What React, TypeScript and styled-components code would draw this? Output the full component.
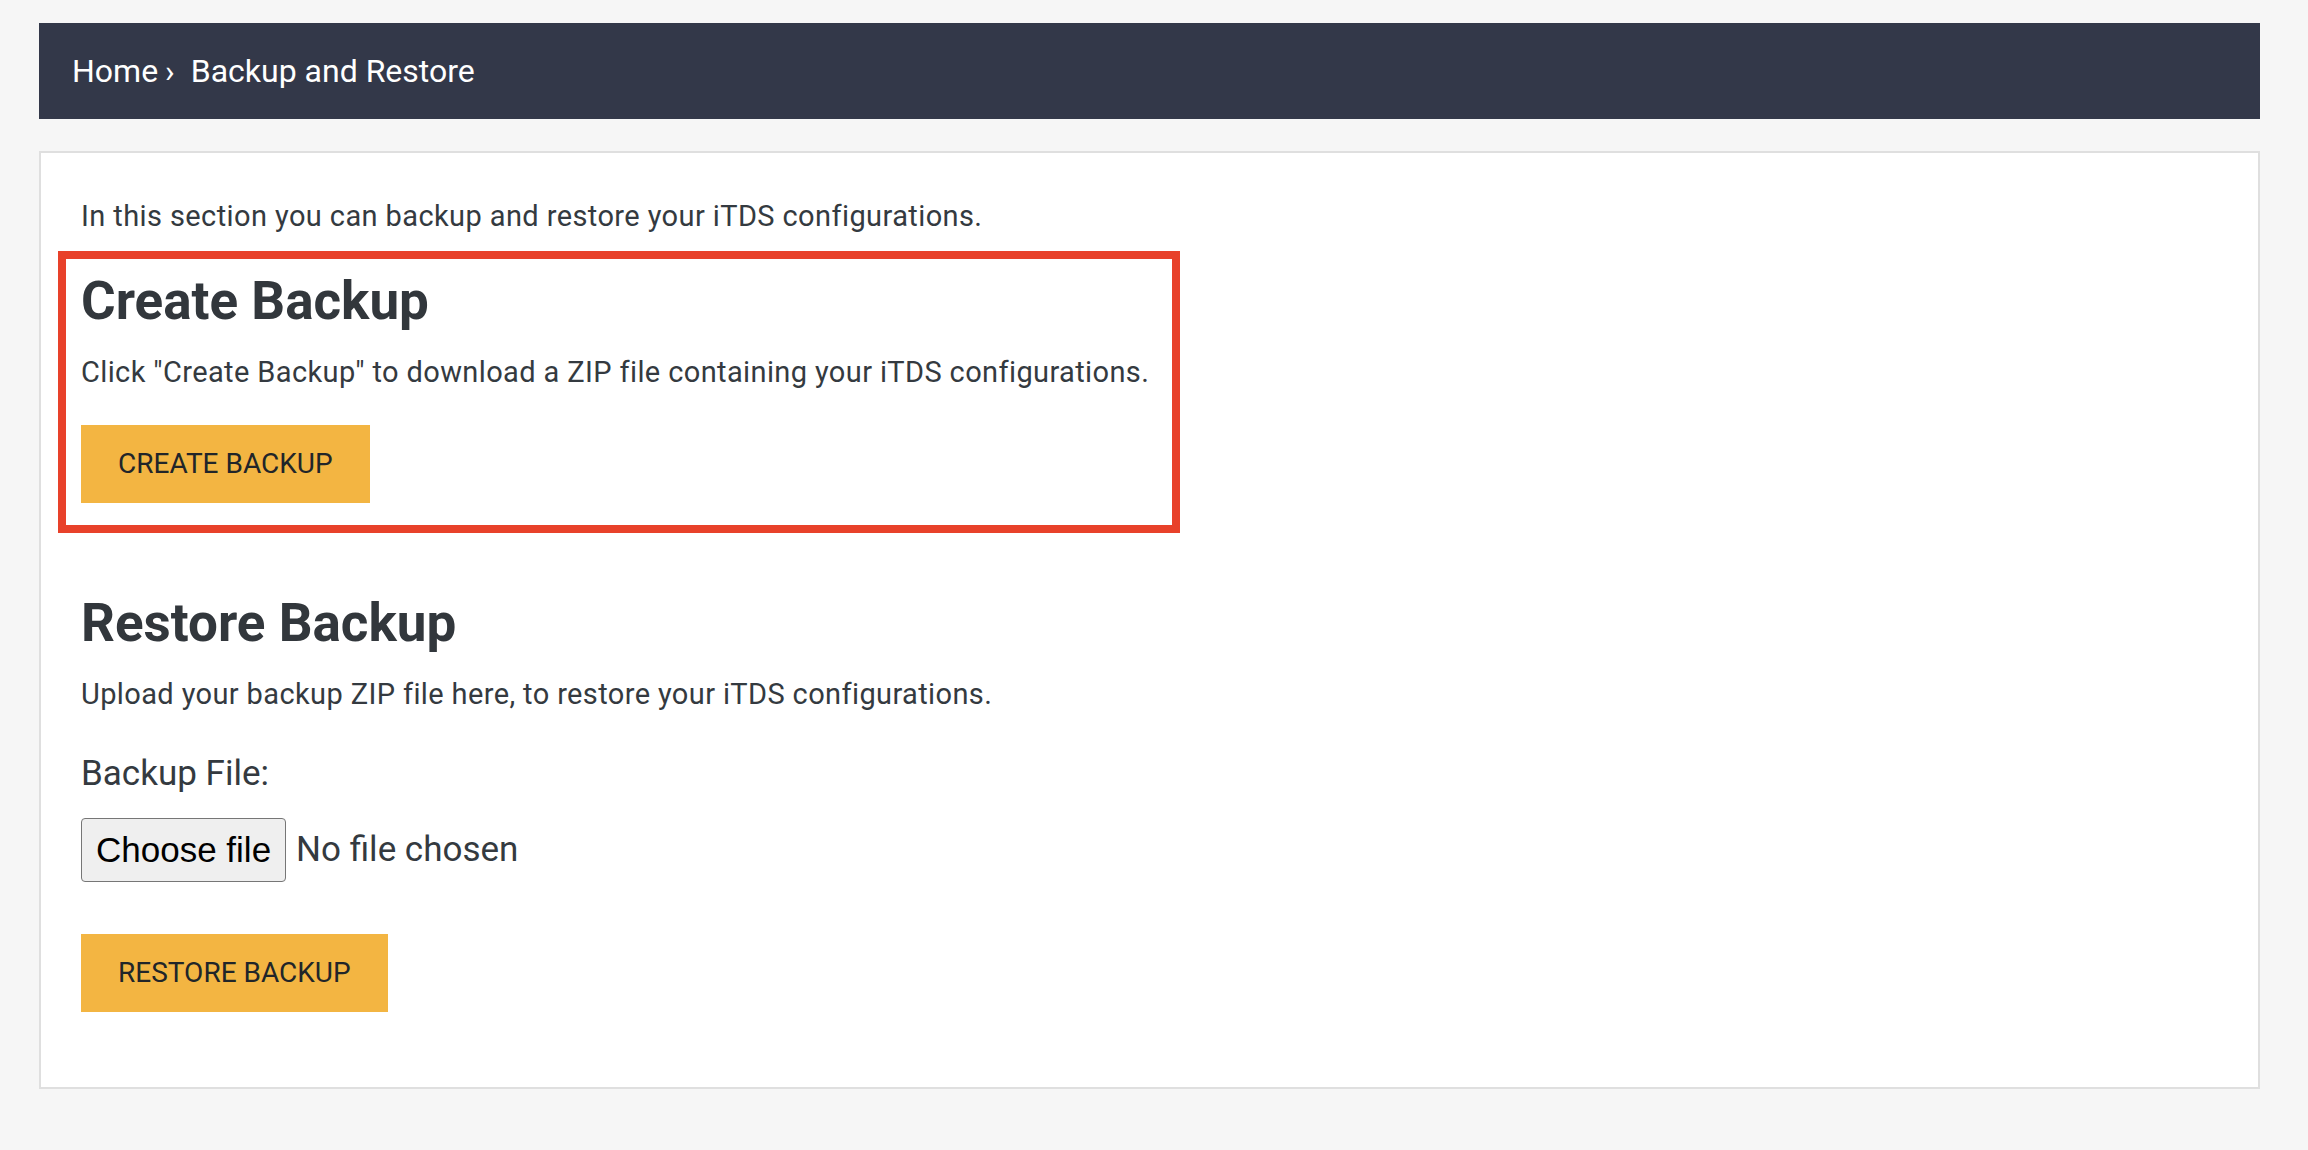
import styled, { createGlobalStyle } from 'styled-components';

const GlobalStyle = createGlobalStyle`
  html,
  body {
    margin: 0;
    padding: 0;
    min-height: 100%;
    background-color: #f6f6f6;
  }

  body {
    font-family: Roboto, 'Liberation Sans', Arial, sans-serif;
    color: #343a40;
  }
`;

export default function App() {
  return (
    <>
      <GlobalStyle />
      <Page>
        <Breadcrumb>
          <Crumb>Home</Crumb>
          <Separator>›</Separator>
          <Crumb>Backup and Restore</Crumb>
        </Breadcrumb>
        <Card>
          <Intro>In this section you can backup and restore your iTDS configurations.</Intro>
          <Highlight>
            <Title>Create Backup</Title>
            <Text>Click "Create Backup" to download a ZIP file containing your iTDS configurations.</Text>
            <ActionButton type="button" $gap={32}>
              CREATE BACKUP
            </ActionButton>
          </Highlight>
          <Section>
            <Title>Restore Backup</Title>
            <Text>Upload your backup ZIP file here, to restore your iTDS configurations.</Text>
            <FieldLabel htmlFor="backup-file">Backup File:</FieldLabel>
            <FileRow>
              <ChooseButton id="backup-file" type="button">
                Choose file
              </ChooseButton>
              <FileName>No file chosen</FileName>
            </FileRow>
            <ActionButton type="button" $gap={52}>
              RESTORE BACKUP
            </ActionButton>
          </Section>
        </Card>
      </Page>
    </>
  );
}

const Page = styled.div`
  display: flex;
  flex-direction: column;
  gap: 32px;
  padding: 23px 48px 60px 39px;
`;

const Breadcrumb = styled.nav`
  display: flex;
  align-items: center;
  height: 96px;
  padding-left: 33px;
  background-color: #333849;
  color: #ffffff;
  font-size: 32px;
  line-height: 1;
`;

const Crumb = styled.span`
  white-space: nowrap;
`;

const Separator = styled.span`
  padding: 0 16px 0 7px;
`;

const Card = styled.main`
  display: flex;
  flex-direction: column;
  align-items: flex-start;
  padding: 42px 40px 75px;
  background-color: #ffffff;
  border: 2px solid #dfdfdf;
`;

const Intro = styled.p`
  margin: 0;
  font-size: 29px;
  line-height: 42px;
  letter-spacing: 0.4px;
`;

const Highlight = styled.div`
  display: flex;
  flex-direction: column;
  align-items: flex-start;
  margin: 14px 0 0 -23px;
  padding: 11px 23px 22px 15px;
  border: 8px solid #e8412a;
`;

const Section = styled.section`
  display: flex;
  flex-direction: column;
  align-items: flex-start;
  margin-top: 59px;
`;

const Title = styled.h2`
  margin: 0 0 19px;
  font-size: 53px;
  font-weight: 700;
  line-height: 62px;
  color: #32373c;
`;

const Text = styled.p`
  margin: 0;
  font-size: 29px;
  line-height: 42px;
  letter-spacing: 0.38px;
  white-space: nowrap;
`;

const ActionButton = styled.button<{ $gap: number }>`
  margin-top: ${({ $gap }) => $gap}px;
  padding: 18px 37px;
  border: none;
  border-radius: 0;
  background-color: #f3b542;
  color: #212529;
  font-family: Roboto, 'Liberation Sans', Arial, sans-serif;
  font-size: 28px;
  line-height: 42px;
  cursor: pointer;
`;

const FieldLabel = styled.label`
  margin-top: 33px;
  font-size: 35px;
  line-height: 51px;
`;

const FileRow = styled.div`
  display: flex;
  align-items: center;
  gap: 10px;
  margin-top: 19px;
`;

const ChooseButton = styled.button`
  height: 64px;
  padding: 12px 14px;
  border: 1px solid #767676;
  border-radius: 4px;
  background-color: #efefef;
  color: #000000;
  font-family: 'Liberation Sans', Arial, sans-serif;
  font-size: 35px;
  line-height: 38px;
`;

const FileName = styled.span`
  font-size: 35px;
  line-height: 38px;
  color: #343a40;
`;
